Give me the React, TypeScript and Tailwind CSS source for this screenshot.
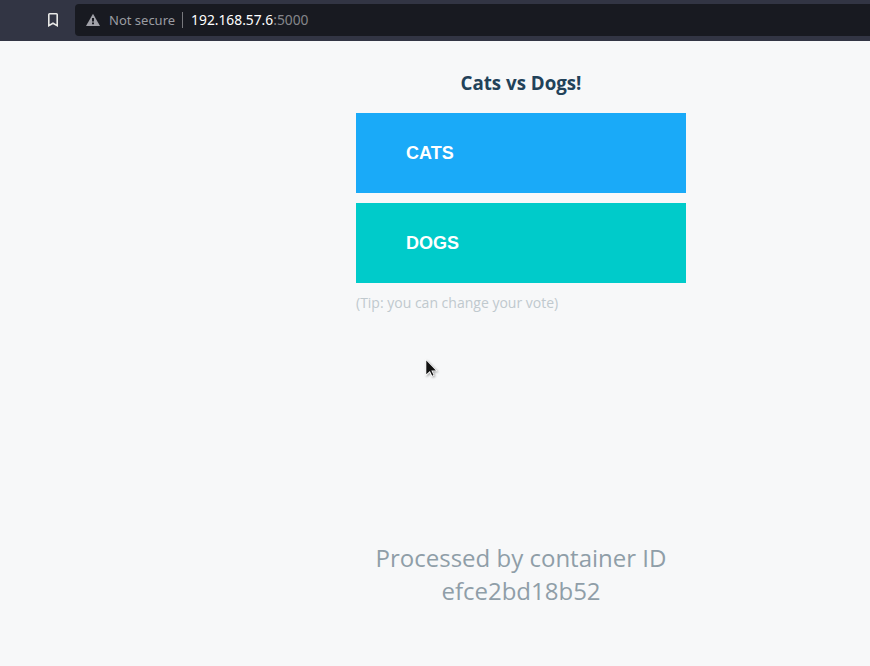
export default function App() {
  return (
    <div className="h-[666px] w-[870px] overflow-hidden bg-[#f7f8f9] font-['Open_Sans',sans-serif]">
      <header className="flex h-[41px] bg-[#323544] pt-1">
        <div className="flex w-[75px] justify-end pt-[8px] pr-[16px]">
          <svg width="12" height="16" viewBox="0 0 12 16" fill="none" stroke="#e8e8e6" strokeWidth="1.6">
            <path d="M1.8 2.5Q1.8 1.7 2.6 1.7H9.4Q10.2 1.7 10.2 2.5V13.7L6 11.2L1.8 13.7Z" />
          </svg>
        </div>
        <div className="flex h-8 flex-1 items-center rounded-l-[4px] bg-[#181a21] pl-[11px] font-['Noto_Sans',sans-serif] text-[13px]">
          <svg width="14" height="14" viewBox="0 0 14 14">
            <path d="M7 .7L14 13H0Z" fill="#a0a1a8" />
            <path d="M6 5h2v3.5H6zM6 9.5h2v1.7H6z" fill="#181a21" />
          </svg>
          <span className="ml-[9px] pt-px text-[#9b9ca1]">Not secure</span>
          <span className="ml-[7px] h-4 w-px bg-[#77787d]" />
          <span className="ml-2 pt-px text-[13.8px] text-white">192.168.57.6<span className="text-[#85868b]">:5000</span></span>
        </div>
      </header>
      <main className="ml-[356px] flex w-[330px] flex-col">
        <h1 className="mt-[29px] text-center text-[18.72px] leading-[26px] font-bold text-[#224259]">Cats vs Dogs!</h1>
        <button className="mt-[17px] h-20 bg-[#1aaaf8] pl-[50px] text-left font-['Liberation_Sans',sans-serif] text-[18px] font-bold text-white">CATS</button>
        <button className="mt-2.5 h-20 bg-[#00cbca] pl-[50px] text-left font-['Liberation_Sans',sans-serif] text-[18px] font-bold text-white">DOGS</button>
        <p className="mt-[10px] text-[14px] leading-5 text-[#c0c9ce]">(Tip: you can change your vote)</p>
        <svg className="mt-[45px] ml-[69px] drop-shadow-[1px_1px_1px_rgba(0,0,0,0.35)]" width="14" height="20" viewBox="0 0 14 20">
          <path d="M.5 1V18.2L4.6 14.5L6.6 18.8L9.5 17.6L7.6 13.2H12.6Z" fill="#fff" />
          <path d="M1.3 2.5V16.3L4.9 13L7.2 17.7L8.5 17.1L6.3 12.4H10.9Z" fill="#111" />
        </svg>
        <p className="mt-[163px] text-center text-[24px] leading-[33px] text-[#8f9ea8]">Processed by container ID efce2bd18b52</p>
      </main>
    </div>
  );
}
